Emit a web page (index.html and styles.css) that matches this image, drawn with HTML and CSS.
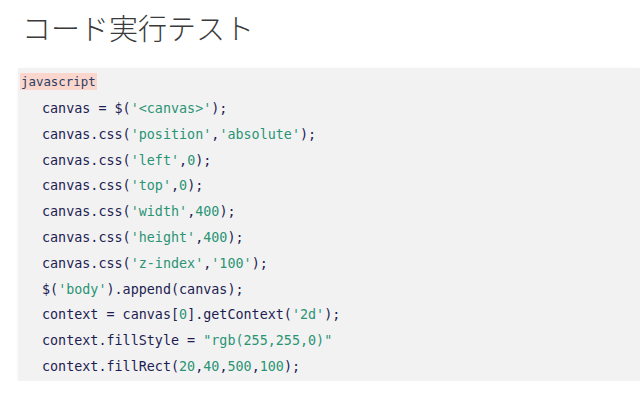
FILE: index.html
```html
<!DOCTYPE html>
<html lang="ja">
<head>
<meta charset="utf-8">
<link rel="stylesheet" href="styles.css">
</head>
<body>
<h1 class="title">コード実行テスト</h1>
<div class="code-block">
<div class="lang">javascript</div>
<div class="code">
<div class="ln">canvas = $(<span class="s">'&lt;canvas&gt;'</span>);</div>
<div class="ln">canvas.css(<span class="s">'position'</span>,<span class="s">'absolute'</span>);</div>
<div class="ln">canvas.css(<span class="s">'left'</span>,<span class="s">0</span>);</div>
<div class="ln">canvas.css(<span class="s">'top'</span>,<span class="s">0</span>);</div>
<div class="ln">canvas.css(<span class="s">'width'</span>,<span class="s">400</span>);</div>
<div class="ln">canvas.css(<span class="s">'height'</span>,<span class="s">400</span>);</div>
<div class="ln">canvas.css(<span class="s">'z-index'</span>,<span class="s">'100'</span>);</div>
<div class="ln">$(<span class="s">'body'</span>).append(canvas);</div>
<div class="ln">context = canvas[<span class="s">0</span>].getContext(<span class="s">'2d'</span>);</div>
<div class="ln">context.fillStyle = <span class="s">"rgb(255,255,0)"</span></div>
<div class="ln">context.fillRect(<span class="s">20</span>,<span class="s">40</span>,<span class="s">500</span>,<span class="s">100</span>);</div>
</div>
</div>
</body>
</html>
```
FILE: styles.css
```css
html, body {
  margin: 0;
  padding: 0;
  background: #ffffff;
}
body {
  font-family: "Noto Sans CJK JP", "Noto Sans", sans-serif;
}
.title {
  margin: 0;
  padding: 6px 0 0 22px;
  font-size: 29px;
  font-weight: 300;
  line-height: 42px;
  color: #3a3a3a;
  height: 62px;
  box-sizing: border-box;
}
.code-block {
  margin: 6px 0 0 18px;
  background: #f2f2f3;
  padding: 5px 0 1px 2px;
  box-shadow: 0 1px 4px rgba(0,0,0,0.04);
}
.lang {
  width: fit-content;
  font-family: "DejaVu Sans Mono", monospace;
  font-size: 12.4px;
  line-height: 17px;
  background: #fad6cd;
  color: #2a3f66;
  padding: 0 1px;
}
.code {
  padding: 6px 0 0 22px;
  font-family: "DejaVu Sans Mono", monospace;
  font-size: 13.4px;
  line-height: 25.8px;
  color: #1d1d52;
}
.ln {
  white-space: pre;
}
.s {
  color: #2b9473;
}
```
